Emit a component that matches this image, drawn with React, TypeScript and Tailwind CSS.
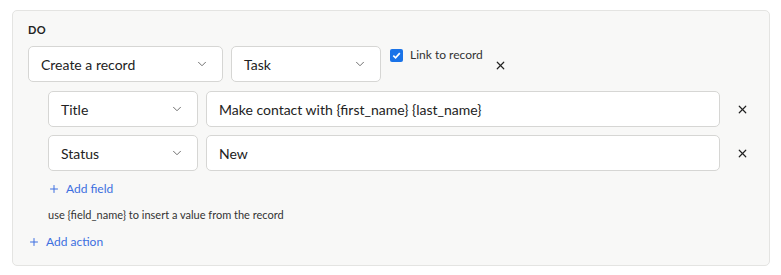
import { ChevronDown, Plus, X } from "lucide-react";

function Select({ label, className }: { label: string; className: string }) {
  return (
    <div
      className={`flex h-[36px] items-center justify-between rounded-[5px] border border-[#d6d6d4] bg-white pl-[12px] pr-[13px] text-[14px] text-[#222] ${className}`}
    >
      <span>{label}</span>
      <ChevronDown className="h-[14px] w-[14px] text-[#666]" strokeWidth={1.6} />
    </div>
  );
}

function FieldRow({ field, value }: { field: string; value: string }) {
  return (
    <div className="flex items-center">
      <Select label={field} className="w-[150px]" />
      <div className="ml-[8px] flex h-[36px] w-[514px] items-center rounded-[5px] border border-[#d6d6d4] bg-white px-[12px] text-[14px] text-[#222]">
        {value}
      </div>
      <button className="ml-[16px] text-[#222]">
        <X className="h-[13px] w-[13px]" strokeWidth={2.2} />
      </button>
    </div>
  );
}

export default function App() {
  return (
    <div className="h-[275px] w-[781px] bg-white pl-[12px] pt-[10px] font-['Lato',sans-serif]">
      <div className="h-[256px] w-[758px] rounded-[5px] border border-[#e4e4e2] bg-[#f8f8f7] pl-[15px] pt-[12px]">
        <div className="text-[11px] font-bold leading-[14px] tracking-[0.5px] text-[#222]">DO</div>
        <div className="mt-[9px] flex items-start">
          <Select label="Create a record" className="w-[195px]" />
          <Select label="Task" className="ml-[8px] w-[150px]" />
          <label className="ml-[9px] mt-[2px] flex items-start gap-[7px]">
            <span className="mt-[1px] flex h-[13px] w-[13px] items-center justify-center rounded-[2px] bg-[#1a73e8]">
              <svg viewBox="0 0 12 12" className="h-[11px] w-[11px]">
                <path d="M2.5 6.2 5 8.6 9.6 3.4" fill="none" stroke="white" strokeWidth="1.8" />
              </svg>
            </span>
            <span className="text-[12px] leading-[14px] text-[#333]">Link to record</span>
          </label>
          <button className="ml-[11px] mt-[13px] text-[#222]">
            <X className="h-[13px] w-[13px]" strokeWidth={2.2} />
          </button>
        </div>
        <div className="ml-[20px] mt-[9px] flex flex-col gap-[8px]">
          <FieldRow field="Title" value="Make contact with {first_name} {last_name}" />
          <FieldRow field="Status" value="New" />
        </div>
        <div className="ml-[20px] mt-[10px] flex items-center gap-[6px] text-[12px] leading-[16px] text-[#3d6fe0]">
          <Plus className="h-[12px] w-[12px]" strokeWidth={2} />
          <span>Add field</span>
        </div>
        <div className="ml-[20px] mt-[11px] text-[11px] leading-[14px] text-[#333]">
          use {"{field_name}"} to insert a value from the record
        </div>
        <div className="mt-[12px] flex items-center gap-[6px] text-[12px] leading-[16px] text-[#3d6fe0]">
          <Plus className="h-[12px] w-[12px]" strokeWidth={2} />
          <span>Add action</span>
        </div>
      </div>
    </div>
  );
}
